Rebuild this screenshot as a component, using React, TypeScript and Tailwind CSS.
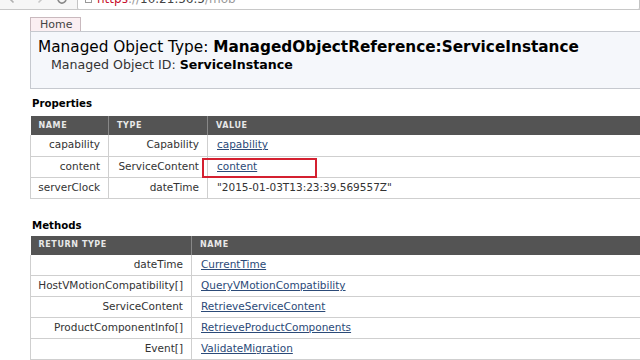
import React from "react";

const font = { fontFamily: '"DejaVu Sans", Verdana, sans-serif' };

const props = [
  { name: "capability", type: "Capability", value: "capability", link: true },
  { name: "content", type: "ServiceContent", value: "content", link: true, mark: true },
  { name: "serverClock", type: "dateTime", value: '"2015-01-03T13:23:39.569557Z"', link: false },
];

const methods = [
  { ret: "dateTime", name: "CurrentTime" },
  { ret: "HostVMotionCompatibility[]", name: "QueryVMotionCompatibility" },
  { ret: "ServiceContent", name: "RetrieveServiceContent" },
  { ret: "ProductComponentInfo[]", name: "RetrieveProductComponents" },
  { ret: "Event[]", name: "ValidateMigration" },
];

function Th({ children, w }: { children: React.ReactNode; w?: string }) {
  return (
    <th
      className={`${w ?? ""} h-[19px] px-[8px] text-left text-[8px] font-bold tracking-[0.6px] text-[#e8e8e8] border-r border-[#888] last:border-r-0`}
    >
      {children}
    </th>
  );
}

export default function App() {
  return (
    <div className="w-[640px] h-[360px] overflow-hidden bg-white text-[#333]" style={font}>
      {/* browser chrome, mostly scrolled off */}
      <div className="h-[10px] overflow-hidden bg-[#f6f6f6] border-b border-[#c8c8c8]">
        <div className="flex items-center -mt-[12px] h-[22px]">
          <div className="flex items-center gap-[12px] pl-[8px] w-[77px]">
            <svg width="12" height="12" viewBox="0 0 12 12" fill="none" stroke="#b0b0b0" strokeWidth="1.6">
              <path d="M10 6H2M5.5 2.5 2 6l3.5 3.5" />
            </svg>
            <svg width="12" height="12" viewBox="0 0 12 12" fill="none" stroke="#c8c8c8" strokeWidth="1.6">
              <path d="M2 6h8M6.5 2.5 10 6l-3.5 3.5" />
            </svg>
            <svg width="12" height="12" viewBox="0 0 12 12" fill="none" stroke="#8a8a8a" strokeWidth="1.6">
              <path d="M10 6a4 4 0 1 1-1.2-2.8M9.5 1.5v2.5H7" />
            </svg>
          </div>
          <div className="flex-1 h-[21px] bg-white border border-[#c4c4c4] rounded-[2px] flex items-center pl-[7px] gap-[5px] text-[12px]">
            <span className="w-[7px] h-[8px] border border-[#999]" />
            <span>
              <span className="text-[#c8102e]">https</span>
              <span className="text-[#999]">://</span>
              <span className="text-[#444]">10.21.56.5</span>
              <span className="text-[#999]">/mob</span>
            </span>
          </div>
        </div>
      </div>

      <div className="pl-[30px] pt-[7px]">
        {/* tab */}
        <div className="flex">
          <div className="w-[51px] h-[14px] bg-[#fbeff2] border border-b-0 border-[#c9b9be] text-[11px] leading-[13px] text-[#444] pl-[9px]">
            Home
          </div>
        </div>
        <div className="h-[58px] bg-[#f5f7fb] border-t border-b border-l border-[#c6c9cf] pl-[7px] pt-[5px]">
          <div className="text-[15.3px] leading-[20px] text-black">
            Managed Object Type: <b>ManagedObjectReference:ServiceInstance</b>
          </div>
          <div className="pl-[13px] text-[12.6px] leading-[16px] text-[#333]">
            Managed Object ID: <b className="text-black">ServiceInstance</b>
          </div>
        </div>

        <div className="mt-[8px] pl-[2px] text-[10.2px] font-bold leading-[14px] text-black">Properties</div>
        <table className="mt-[5px] w-[640px] border-collapse text-[10.5px]">
          <thead>
            <tr className="bg-[#545454]">
              <Th w="w-[78px]">NAME</Th>
              <Th w="w-[99px]">TYPE</Th>
              <Th>VALUE</Th>
            </tr>
          </thead>
          <tbody>
            {props.map((p) => (
              <tr key={p.name} className="h-[21px] border-b border-[#cfcfcf]">
                <td className="border-l border-r border-[#cfcfcf] pr-[8px] text-right">{p.name}</td>
                <td className="border-r border-[#cfcfcf] pr-[8px] text-right">{p.type}</td>
                <td className="pl-[9px] relative">
                  {p.link ? (
                    <span className="text-[#2b4a78] underline">{p.value}</span>
                  ) : (
                    p.value
                  )}
                  {p.mark && (
                    <span className="absolute left-[-6px] top-[1px] w-[115px] h-[20px] border-2 border-[#d42030]" />
                  )}
                </td>
              </tr>
            ))}
          </tbody>
        </table>

        <div className="mt-[20px] pl-[2px] text-[10.2px] font-bold leading-[14px] text-black">Methods</div>
        <table className="mt-[3px] w-[640px] border-collapse text-[10.5px]">
          <thead>
            <tr className="bg-[#545454]">
              <Th w="w-[161px]">RETURN TYPE</Th>
              <Th>NAME</Th>
            </tr>
          </thead>
          <tbody>
            {methods.map((m) => (
              <tr key={m.name} className="h-[21px] border-b border-[#cfcfcf]">
                <td className="border-l border-r border-[#cfcfcf] pr-[8px] text-right">{m.ret}</td>
                <td className="pl-[9px]">
                  <span className="text-[#2b4a78] underline">{m.name}</span>
                </td>
              </tr>
            ))}
          </tbody>
        </table>
      </div>
    </div>
  );
}
